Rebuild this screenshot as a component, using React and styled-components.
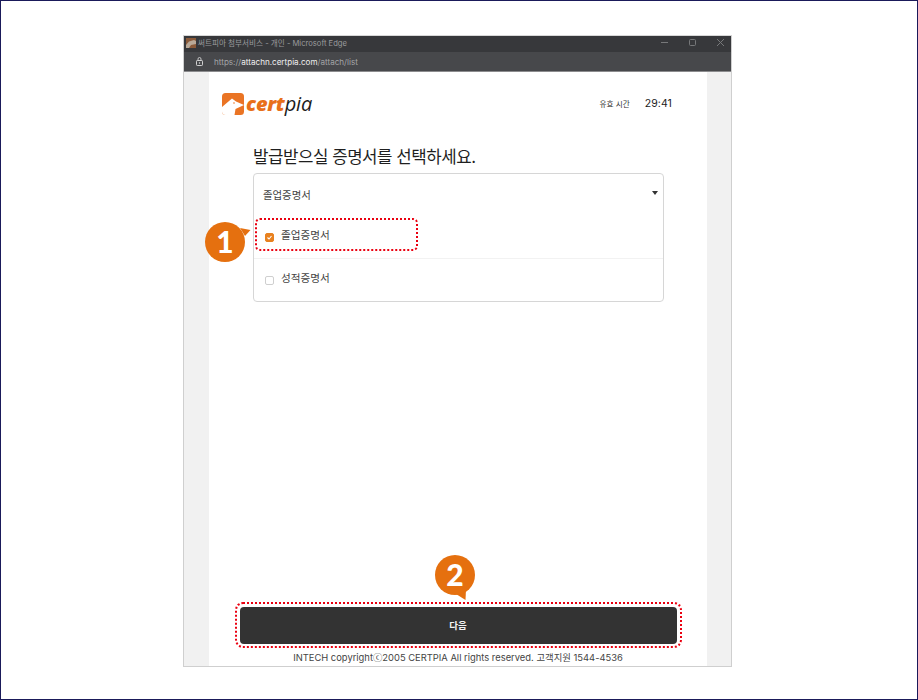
import React from "react";
import styled, { createGlobalStyle } from "styled-components";

const Global = createGlobalStyle`
  html, body { margin: 0; padding: 0; background: #fff; }
  * { box-sizing: border-box; }
  body { font-family: Inter, "Noto Sans CJK KR", sans-serif; }
`;
const Frame = styled.div`
  width: 918px; height: 700px; border: 1px solid #1a1a5a; background: #fff;
  display: flex; justify-content: center; padding: 34px 3px 0 0;
`;
const Win = styled.div`
  width: 549px; height: 632px; border: 1px solid #cfcfcf; border-top-color: #d8d8d8;
  display: flex; flex-direction: column; background: #f1f1f1;
`;
const TitleBar = styled.div`
  height: 16px; background: #37383b; display: flex; align-items: center; padding: 0 0 3px 2px;
  color: #9a9b9d; font-size: 7.6px; gap: 2px; flex: none;
`;
const Favicon = styled.svg`width: 10px; height: 10px; flex: none;`;
const WinCtrls = styled.div`
  margin-left: auto; display: flex; align-items: center; gap: 21px; padding-right: 7px;
`;
const AddrBar = styled.div`
  height: 20px; background: #47484b; border-bottom: 1px solid #8c8c8e; display: flex; align-items: center;
  padding-left: 12px; gap: 11px; color: #a3a4a6; font-size: 8.1px; flex: none;
`;
const Host = styled.span`color: #f0f0f0;`;
const Page = styled.div`
  flex: 1; margin: 0 24px 0 25px; background: #fff; display: flex; flex-direction: column; min-height: 0;
`;
const Header = styled.div`
  height: 71px; display: flex; align-items: flex-start; padding: 19px 35px 0 13px; flex: none;
`;
const Logo = styled.div`display: flex; align-items: center; gap: 2px;`;
const Brand = styled.div`
  font-family: "Open Sans", sans-serif; font-style: italic; font-size: 20px; line-height: 24px; letter-spacing: -0.2px;
  color: #e8701a; font-weight: 800; margin-top: 1px;
`;
const Pia = styled.span`color: #1c1c1c; font-weight: 400;`;
const Timer = styled.div`
  margin-left: auto; display: flex; align-items: center; gap: 15px; height: 24px;
`;
const TimerLabel = styled.span`font-size: 7.6px; color: #333;`;
const TimerValue = styled.span`font-size: 10.5px; color: #1a1a1a; letter-spacing: 0.1px;`;
const Main = styled.div`
  flex: 1; padding: 0 44px; display: flex; flex-direction: column; min-height: 0;
`;
const Heading = styled.h1`
  margin: 2px 0 4px; font-size: 16.8px; line-height: 24px; font-weight: 400; color: #1f1f1f; letter-spacing: -0.46px;
`;
const Select = styled.div`
  width: 411px; height: 129px; border: 1px solid #d6d6d6; border-radius: 4px; display: flex; flex-direction: column; position: relative; flex: none;
`;
const SelectHead = styled.div`
  height: 42px; display: flex; align-items: center; justify-content: space-between; padding: 0 5px 2px 9px;
  font-size: 10.4px; color: #444; flex: none;
`;
const Caret = styled.span`
  width: 0; height: 0; border-left: 3.5px solid transparent; border-right: 3.5px solid transparent; border-top: 4px solid #333; margin-top: -3px;
`;
const Option = styled.div`
  height: ${p => p.$h}px; display: flex; align-items: center; padding: 0 0 6px 11px; gap: 7px; font-size: 10.6px; color: #444;
  border-bottom: ${p => (p.$line ? "1px solid #f2f2f2" : "none")}; flex: none;
`;
const Check = styled.span`
  width: 9px; height: 9px; border-radius: 2px; display: flex; align-items: center; justify-content: center; flex: none; margin-top: 6px;
  background: ${p => (p.$on ? "#e8811f" : "#fff")};
  border: 1px solid ${p => (p.$on ? "#e8811f" : "#cfcfcf")};
`;
const Highlight = styled.div`
  position: absolute; border: 2px dotted #ea0010; pointer-events: none;
  left: ${p => p.$x}px; top: ${p => p.$y}px; width: ${p => p.$w}px; height: ${p => p.$h}px; border-radius: ${p => p.$r}px;
`;
const Footer = styled.div`
  margin: auto -44px 0; display: flex; flex-direction: column; align-items: center; position: relative; flex: none;
`;
const NextButton = styled.button`
  width: 437px; height: 37px; background: #333; border: 0; border-radius: 4px; color: #f2f2f2; font-size: 9.5px; font-weight: 700;
  font-family: inherit; padding: 0 0 2px;
`;
const Copy = styled.div`
  margin-top: 7px; height: 15px; line-height: 13px; font-size: 9.4px; color: #444; white-space: nowrap;
`;
const Badge = styled.svg`
  position: absolute; left: ${p => p.$x}px; top: ${p => p.$y}px; overflow: visible;
`;
const BadgeNum = styled.text`
  font-family: Lato, sans-serif; font-weight: 900; font-size: 30px; fill: #fff; text-anchor: middle;
`;

export default function App() {
  return (
    <>
      <Global />
      <Frame>
        <Win>
          <TitleBar>
            <Favicon viewBox="0 0 10 10">
              <rect width="10" height="10" fill="#8a5a3a" />
              <path d="M0 7 L3 3.5 L8 2 L10 3 V6 L5 7 L3 10 H0Z" fill="#b9a998" />
            </Favicon>
            <span>써트피아 첨부서비스 - 개인 - Microsoft Edge</span>
            <WinCtrls>
              <svg width="7" height="7" viewBox="0 0 7 7"><path d="M0 3.5H7" stroke="#77787a" /></svg>
              <svg width="7" height="7" viewBox="0 0 7 7"><rect x=".5" y=".5" width="6" height="6" rx="1" fill="none" stroke="#77787a" /></svg>
              <svg width="7" height="7" viewBox="0 0 7 7"><path d="M0 0L7 7M7 0L0 7" stroke="#77787a" /></svg>
            </WinCtrls>
          </TitleBar>
          <AddrBar>
            <svg width="7" height="9" viewBox="0 0 7 9"><path d="M2 3.5V2a1.5 1.5 0 0 1 3 0v1.5" fill="none" stroke="#e0e0e0" strokeWidth=".8" /><rect x=".5" y="3.5" width="6" height="5" rx=".8" fill="none" stroke="#e0e0e0" strokeWidth=".9" /><circle cx="3.5" cy="6" r=".7" fill="#e0e0e0" /></svg>
            <span>https://<Host>attachn.certpia.com</Host>/attach/list</span>
          </AddrBar>
          <Page>
            <Header>
              <Logo>
                <svg width="22" height="22" viewBox="0 0 22 22">
                  <rect width="22" height="22" rx="3.5" fill="#ea7424" />
                  <path d="M0 14 L10 5.5 L14 8.5 L22 12 L13.5 16 L12.5 22 H3.5 Q0 22 0 18.5Z" fill="#fff" />
                  <circle cx="12" cy="10" r=".8" fill="#ea7424" />
                </svg>
                <Brand>cert<Pia>pia</Pia></Brand>
              </Logo>
              <Timer>
                <TimerLabel>유효 시간</TimerLabel>
                <TimerValue>29:41</TimerValue>
              </Timer>
            </Header>
            <Main>
              <Heading>발급받으실 증명서를 선택하세요.</Heading>
              <Select>
                <SelectHead>졸업증명서<Caret /></SelectHead>
                <Option $h={43} $line><Check $on><svg width="7" height="7" viewBox="0 0 7 7"><path d="M1.5 3.5L3 5L5.5 2" fill="none" stroke="#fff" strokeWidth="1.1" /></svg></Check>졸업증명서</Option>
                <Option $h={42}><Check />성적증명서</Option>
                <Highlight $x={1} $y={44} $w={163} $h={33} $r={5} />
                <Badge $x={-49} $y={48} width="46" height="40" viewBox="0 0 46 40">
                  <path d="M35 6 L45.5 8 L40 14Z" fill="#e5700f" />
                  <circle cx="20" cy="20" r="20" fill="#e5700f" />
                  <BadgeNum x="20" y="30.5">1</BadgeNum>
                </Badge>
              </Select>
              <Footer>
                <NextButton>다음</NextButton>
                <Copy>INTECH copyrightⓒ2005 CERTPIA All rights reserved. 고객지원 1544-4536</Copy>
                <Highlight $x={26} $y={-5} $w={447} $h={46} $r={8} />
                <Badge $x={226} $y={-52} width="40" height="46" viewBox="0 0 40 46">
                  <path d="M31 34 L30.5 45 L21 39Z" fill="#e5700f" />
                  <circle cx="20" cy="20" r="20" fill="#e5700f" />
                  <BadgeNum x="20" y="30.5">2</BadgeNum>
                </Badge>
              </Footer>
            </Main>
          </Page>
        </Win>
      </Frame>
    </>
  );
}
